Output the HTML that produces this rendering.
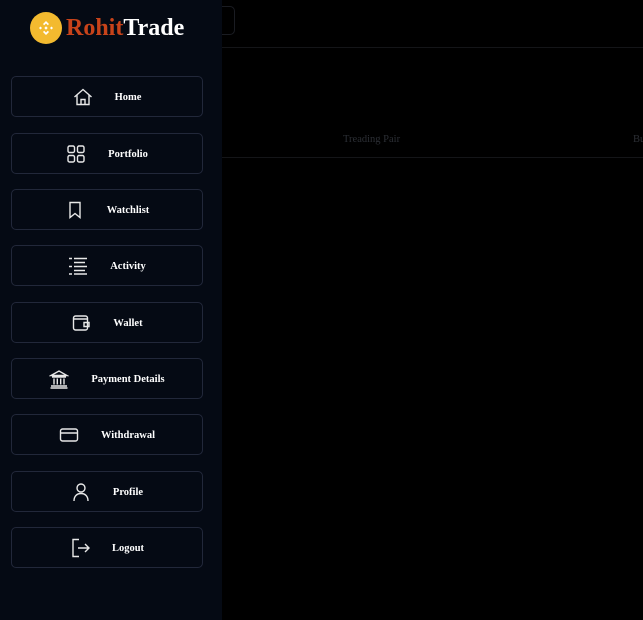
<!DOCTYPE html>
<html><head><meta charset="utf-8"><style>
*{box-sizing:border-box;margin:0;padding:0}
body{width:643px;height:620px;background:#000;overflow:hidden;position:relative;font-family:"Liberation Serif",serif}
.side{position:absolute;left:0;top:0;width:222px;height:620px;background:#050a14}
.logo{position:absolute;left:30px;top:12px;display:flex;align-items:center}
.coin{width:32px;height:32px;border-radius:50%;background:#f3ba2f;display:flex;align-items:center;justify-content:center}
.lt{font-weight:bold;font-size:24px;margin-left:4px;color:#fff;letter-spacing:0}
.lt span{color:#c8431a}
.btn{position:absolute;left:11px;width:192px;height:41px;padding-top:1px;border:1px solid #22283a;border-radius:5px;display:flex;align-items:center;justify-content:center;gap:22px;color:#fff;font-weight:bold;font-size:10.5px}
.btn svg{width:20px;height:20px;fill:none;stroke:#e8e8e8;stroke-width:1.4;flex:none}
.top{position:absolute;left:205px;top:6px;width:30px;height:29px;border:1px solid #1a1c22;border-radius:5px}
.l1{position:absolute;left:222px;right:0;top:47px;height:1px;background:#141518}
.l2{position:absolute;left:222px;right:0;top:157px;height:1px;background:#141518}
.th{position:absolute;top:134px;font-size:10.5px;color:#2c2f35}
</style></head><body>
<div class="top"></div>
<div class="l1"></div><div class="l2"></div>
<div class="th" style="left:343px">Treading Pair</div>
<div class="th" style="left:633px">Bu</div>
<div class="side">
<div class="logo"><div class="coin"><svg width="18" height="18" viewBox="0 0 18 18" fill="#fff"><path d="M9 2l3 3-1.2 1.2L9 4.4 7.2 6.2 6 5z M9 16l-3-3 1.2-1.2L9 13.6l1.8-1.8L12 13z M2 9l1.5-1.5L5 9l-1.5 1.5z M13 9l1.5-1.5L16 9l-1.5 1.5z M9 7.3L10.7 9 9 10.7 7.3 9z"/></svg></div><div class="lt"><span>Rohit</span>Trade</div></div>
<div class="btn" style="top:76px"><svg viewBox="0 0 20 20"><path d="M1.5 10L10 2.5 18.5 10M4 8V17.5h12V8M8 17.5v-5h4v5"/></svg>Home</div>
<div class="btn" style="top:133px"><svg viewBox="0 0 20 20"><rect x="2" y="2" width="6.5" height="6.5" rx="1.5"/><rect x="11.5" y="2" width="6.5" height="6.5" rx="1.5"/><rect x="2" y="11.5" width="6.5" height="6.5" rx="1.5"/><rect x="11.5" y="11.5" width="6.5" height="6.5" rx="1.5"/></svg>Portfolio</div>
<div class="btn" style="top:189px"><svg viewBox="0 0 20 20"><path d="M5 2.5h10v15l-5-4-5 4z"/></svg>Watchlist</div>
<div class="btn" style="top:245px"><svg viewBox="0 0 20 20"><path d="M1 2.5h3M6 2.5h13M6 6.5h11M1 10.5h3M6 10.5h13M6 14.5h11M1 18h3M6 18h13"/></svg>Activity</div>
<div class="btn" style="top:302px"><svg viewBox="0 0 20 20"><rect x="2.5" y="3" width="14" height="14" rx="2"/><path d="M2.5 6h14M13 9.5h5v4h-5z"/></svg>Wallet</div>
<div class="btn" style="top:358px"><svg viewBox="0 0 20 20"><path d="M2 6.5L10 2l8 4.5zM3 8h14M5 9.5v6M8.3 9.5v6M11.7 9.5v6M15 9.5v6M2 17h16M1.5 19h17"/></svg>Payment Details</div>
<div class="btn" style="top:414px"><svg viewBox="0 0 20 20"><rect x="1.5" y="4" width="17" height="12" rx="2"/><path d="M1.5 8h17"/></svg>Withdrawal</div>
<div class="btn" style="top:471px"><svg viewBox="0 0 20 20"><circle cx="10" cy="6" r="4"/><path d="M3 19c0-5 3-7.5 7-7.5s7 2.5 7 7.5"/></svg>Profile</div>
<div class="btn" style="top:527px"><svg viewBox="0 0 20 20"><path d="M9 1.5H3v17h6M8 10h11M15 6l4 4-4 4"/></svg>Logout</div>
</div>
</body></html>
